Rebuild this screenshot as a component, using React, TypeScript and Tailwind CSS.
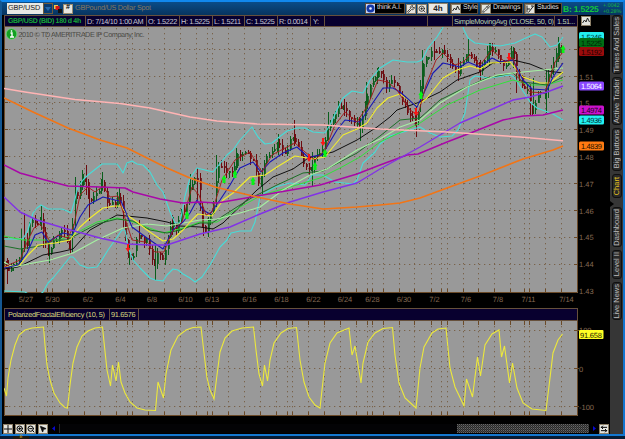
import { Fragment } from "react";
import type { ReactNode } from "react";
import { ArrowLeftRight, MousePointer2, Pencil, Wrench, ZoomIn, ZoomOut } from "lucide-react";

type Point = [number, number];

const parse = (s: string): Point[] =>
  s.trim().split(/\s+/).map((p) => p.split(",").map(Number) as Point);

const gridX = [
  21.5, 36.5, 47.5, 52.5, 68.5, 84.5, 100.5, 116.5, 127.5, 132.5, 148.5, 164.5, 180.5, 196.5, 207.5, 212.5, 228.5,
  244.5, 260.5, 276.5, 287.5, 292.5, 308.5, 324.5, 340.5, 356.5, 367.5, 372.5, 383.5, 399.5, 414.5, 431.5, 441.5,
  447.5, 463.5, 478.5, 494.5, 510.5, 524.5, 529.5, 545.5, 561.5,
];
const gridY = [49.5, 76.5, 102.5, 129.5, 156.5, 183.5, 210.5, 237.5, 264.5];

const priceLabels: [string, number][] = [
  ["1.51", 76.5], ["1.5", 103], ["1.49", 129.5], ["1.48", 156.5], ["1.47", 183.5],
  ["1.46", 210.5], ["1.45", 237], ["1.44", 264], ["1.43", 291],
];

const dates: [string, number][] = [
  ["5/27", 26], ["5/30", 52.5], ["6/2", 88], ["6/4", 120.5], ["6/8", 152], ["6/10", 185.5], ["6/13", 212],
  ["6/16", 249.5], ["6/18", 281.5], ["6/22", 313.5], ["6/24", 345], ["6/28", 372.5], ["6/30", 404],
  ["7/2", 434.5], ["7/6", 466], ["7/8", 498], ["7/11", 528.5], ["7/14", 566.5],
];

const studies: { color: string; width: number; points: string }[] = [
  { color: "#48dcd8", width: 1.1, points: "4,239 23,239 28,230 33,213 37,208 41,205 48,209 62,209 67,211 71,213 74,203 78,187 83,180 88,175 102,164 117,164 120,168 123,173 127,163 132,161 137,164 143,165 150,172 157,185 163,192 170,212 175,223 180,223 185,196 190,178 197,168 213,172 227,155 233,150 240,140 252,127 258,137 265,144 272,143 278,138 287,131 297,128 305,128 313,132 325,133 330,125 337,110 343,98 352,91 363,93 370,80 380,68 393,60 407,62 417,62 422,60 428,48 437,37 445,24 461,20 464,30 468,38 475,43 500,46 515,43 528,37 535,34 542,37 550,47 557,45 563,37" },
  { color: "#48dcd8", width: 1.1, points: "4,291 25,292 35,298 43,292 48,283 53,278 62,267 70,257 73,257 80,265 88,268 97,267 100,263 108,250 115,240 122,230 125,230 128,247 133,260 140,268 150,278 155,280 163,281 167,275 173,269 178,270 183,274 190,278 195,282 202,277 210,265 220,247 227,240 231,233 240,231 251,231 255,222 260,197 265,193 275,187 290,183 305,185 312,175 323,175 335,182 353,184 357,180 363,163 375,152 380,144 390,136 400,133 420,127 430,133 440,137 452,136 458,130 465,113 470,80 475,76 490,78 510,75 514,77 530,102 537,108 553,114 563,120" },
  { color: "#101010", width: 1, points: "4,269 18,267 43,255 60,252 73,249 90,230 117,215 147,218 167,222 180,226 200,227 213,229 223,223 257,190 273,177 293,169 303,162 308,158 333,152 357,140 377,127 390,117 397,110 417,103 440,92 457,80 480,72 493,63 513,60 530,64 547,71 563,73" },
  { color: "#2fe33a", width: 1, points: "4,236 23,240 60,240 80,231 97,222 117,218 133,222 163,233 183,228 200,222 217,222 240,207 262,195 290,187 320,178 340,168 360,157 380,142 420,123 447,105 480,90 513,80 530,85 547,85 563,80" },
  { color: "#1c6f26", width: 1, points: "4,246 20,249 40,246 55,240 67,240 80,233 97,224 117,219 133,221 150,230 167,233 180,230 200,223 212,223 240,205 253,197 277,185 303,173 323,171 357,153 380,136 400,120 420,118 440,100 460,90 487,78 513,73 523,82 547,85 563,77" },
  { color: "#a5f0a2", width: 1.1, points: "4,262 13,267 33,263 50,260 73,253 97,240 123,228 147,224 167,226 200,220 217,219 240,213 260,207 283,190 310,175 327,169 357,150 380,139 400,127 420,120 440,103 467,87 497,75 513,73 563,68" },
  { color: "#f2ee30", width: 1.1, points: "4,267 20,265 28,255 38,245 55,243 70,240 80,227 90,218 103,208 115,206 121,206 127,215 137,222 147,230 163,241 173,239 183,230 190,222 198,214 212,216 223,200 233,193 250,177 265,175 277,167 295,156 313,159 325,157 333,147 343,135 357,129 367,123 377,108 388,98 400,94 417,106 427,98 443,78 457,70 470,66 480,69 490,63 510,62 523,77 540,83 550,83 563,72" },
  { color: "#1717b4", width: 1.1, points: "4,268 18,265 27,253 35,235 42,232 48,242 63,233 72,235 80,217 88,205 103,197 115,200 121,201 132,227 147,238 163,249 173,230 183,222 190,213 197,200 203,210 210,214 220,200 230,185 240,168 253,162 261,172 270,162 283,153 297,147 308,157 322,155 337,130 345,120 360,122 370,107 383,88 393,88 400,92 417,107 423,95 433,73 443,63 460,67 468,62 480,67 492,58 500,62 513,60 523,80 532,89 547,90 553,77 563,63" },
  { color: "#a31616", width: 0.9, points: "4,267 20,260 28,240 34,228 40,224 45,232 50,242 58,235 68,238 74,225 80,195 88,187 95,192 103,186 110,197 118,196 124,215 132,240 145,242 155,252 164,252 172,232 182,222 192,187 199,195 206,215 212,212 222,180 235,160 250,152 262,172 272,155 285,148 295,143 305,152 315,160 325,150 335,125 345,112 357,122 368,105 378,80 388,82 397,90 410,110 418,115 426,85 436,60 443,53 455,65 463,62 470,55 480,65 492,50 505,62 513,58 520,80 530,92 545,93 555,62 563,52" },
  { color: "#a808a8", width: 1.4, points: "4,165 20,173 45,180 68,186 100,187 125,188 133,192 160,199 183,203 200,202 217,203 257,196 320,185 357,174 380,165 407,155 418,154 447,142 473,132 503,120 523,116 543,115 563,110" },
  { color: "#8232e6", width: 1.4, points: "4,197 20,212 37,220 67,229 100,238 127,244 150,245 167,245 200,234 230,227 260,214 290,202 323,192 357,183 380,169 420,147 460,123 490,110 513,100 530,97 547,92 563,86" },
  { color: "#f27516", width: 1.5, points: "4,98 33,112 68,128 100,140 127,148 167,168 190,178 215,187 257,197 290,204 323,209 357,207 380,205 400,203 420,198 447,188 480,176 523,159 553,150 563,146" },
  { color: "#ffb4b4", width: 1.6, points: "4,88.5 25,92 75,99.5 120,103.5 150,108 190,117 217,121 257,124 323,125 380,129 447,132 520,137 563,140.7" },
];

const closes = parse(
  "2,267 5,266 8,270 12,262 18,263 21,250 24,240 27,248 30,220 33,218 36,228 39,222 41,215 44,240 46,248 49,256 52,240 56,240 60,231 63,230 66,238 70,249 73,210 75,190 78,198 80,185 82,176 84,178 87,190 89,210 91,198 95,195 98,195 102,182 105,195 108,210 112,200 115,205 119,192 121,210 124,235 127,248 129,258 133,255 136,240 140,232 143,245 147,240 150,250 153,268 155,260 158,250 162,260 166,245 169,230 172,222 176,230 180,210 184,212 187,205 190,185 194,180 197,178 199,200 203,230 206,235 208,215 212,212 215,185 217,165 219,167 224,168 228,173 232,175 236,155 240,155 247,153 250,157 253,163 257,180 259,187 262,173 265,155 272,153 278,140 282,150 285,155 290,140 294,137 298,148 303,163 307,168 311,172 315,152 320,155 324,145 328,127 333,120 338,108 345,110 350,118 355,122 360,127 365,100 370,87 377,73 381,75 385,88 390,80 395,83 400,95 405,107 408,118 413,118 416,123 419,103 421,83 423,67 427,55 432,53 435,50 442,52 447,57 452,65 458,73 463,60 468,53 473,58 480,73 485,57 488,48 495,50 502,63 505,67 508,57 513,50 517,73 522,85 527,90 530,110 533,113 537,92 542,93 546,93 548,77 552,67 555,57 558,45 563,48",
);

// x, high, low
const spikes: [number, number, number, boolean][] = [
  [7, 258, 284, false], [21, 229, 260, true], [24.5, 213, 250, false], [41, 206, 230, true], [43.5, 213, 248, false],
  [49, 243, 263, true], [70, 238, 254, false], [75, 177, 200, true], [82.5, 170, 190, true], [86.5, 165, 195, false],
  [89, 190, 221, false], [102.5, 172, 190, true], [119, 187, 204, true], [129, 245, 265, true], [139.5, 220, 240, false],
  [155.5, 245, 280, true], [172.5, 215, 235, false], [190, 174, 200, true], [197.5, 168, 200, false],
  [203.5, 215, 236, false], [216.5, 155, 190, true], [236, 148, 170, true], [262.5, 168, 196, true],
  [278, 134, 155, true], [294, 120, 146, false], [312, 152, 186, true], [328.5, 112, 140, true], [344.5, 99, 116, false],
  [360.5, 118, 141, true], [366, 82, 105, true], [377, 68, 84, true], [416.5, 105, 137, false], [422, 50, 100, true],
  [434.5, 41, 60, false], [458.5, 58, 81, false], [468, 38, 62, true], [480, 60, 80, false], [489, 43, 66, true],
  [513, 47, 68, true], [516, 55, 93, false], [530.5, 88, 116, false], [533.5, 78, 114, true], [546.5, 70, 113, true],
  [558.5, 37, 62, true],
];

function yAt(x: number) {
  const i = Math.max(1, closes.findIndex((p) => p[0] >= x));
  const [x0, y0] = closes[i - 1];
  const [x1, y1] = closes[i];
  return y0 + ((y1 - y0) * (x - x0)) / (x1 - x0);
}

const noise = (n: number) => {
  const v = Math.sin(n * 127.1) * 43758.5453;
  return v - Math.floor(v);
};

const candles = Array.from({ length: 210 }, (_, i) => {
  const x = 5.5 + i * 2.66;
  const open = yAt(x - 2.66) + (noise(i) - 0.5) * 5;
  const close = yAt(x) + (noise(i + 1) - 0.5) * 5;
  const top = Math.round(Math.min(open, close));
  const bottom = Math.round(Math.max(open, close));
  return {
    x: Math.round(x),
    up: close < open,
    top,
    height: Math.min(12, Math.max(2, bottom - top)),
    high: top - Math.round(noise(i + 300) * 6),
    low: bottom + Math.round(noise(i + 600) * 6),
  };
});

const signals: [number, number, boolean][] = [
  [128, 248, false], [187, 215, true], [224, 179, true], [235, 174, true], [253, 181, true], [309, 158, false],
  [315, 166, true], [323, 142, false], [325, 153, true], [416, 112, false], [421, 95, true], [509, 57, false],
  [563, 49, true],
];

const pfe =
  "4,388 6.5,396 8,378 11,360 15,345 19,335 25,330 32,328 43.5,327 45,345 47,365 50,380 54,393 60,403 65,407.5 67.5,408 70,385 73,363 77,347 82,336 88,331 95,328 102.5,327 104,342 107,370 110.5,386 112.5,365 116,381 118.5,362 121,382 125,393 130,402 137,408 145,410 155.5,410.5 158,382 163.5,398 166,374 171,350 178,336 186,330 193,327.5 201,327 204,353 207,378 210,390 214,399 217,375 220,352 225,338 232,331 242,328 253.5,327 256,350 259,374 262.5,386 264.5,365 267.5,381 270,360 274,343 281,333 288,328.5 296.5,327.5 300,360 304,382 309,397 315,405 320,408 325,363 330,343 337,333 349,328 352,355 355,346 361,383 363,363 368,342 375,333 383,328.5 392.5,327.5 395,355 399,383 405,398 416,408 420,368 424,347 432,333 438,329 446,328 450,368 455,387 464,406 466.5,379 472.5,397 477.5,357 480.5,376 485,345 492,334 499,330 501.5,357 504.5,346 509.5,383 512.5,363 517,388 523,403 532,409 546,410.5 550,378 553,353 558,340 562.5,334";

const tags: { label: string; y: number; fill: string; text: string }[] = [
  { label: "1.5246", y: 36.5, fill: "#22eeee", text: "#003838" },
  { label: "1.5225", y: 42.5, fill: "#006e14", text: "#001c04" },
  { label: "1.5192", y: 51.5, fill: "#9a0c0c", text: "#1c0000" },
  { label: "1.5064", y: 86, fill: "#8a48ff", text: "#ffffff" },
  { label: "1.4974", y: 110, fill: "#cc12cc", text: "#180018" },
  { label: "1.4936", y: 120, fill: "#22f2f2", text: "#003030" },
  { label: "1.4839", y: 146, fill: "#ff7a12", text: "#201000" },
];

function PriceTag({ label, y, fill, text }: { label: string; y: number; fill: string; text: string }) {
  return (
    <g>
      <rect x="579" y={y - 4.5} width="25" height="9" rx="1.5" fill={fill} />
      <text x="581" y={y + 3} fontSize="7.5" fill={text} textLength="21">{label}</text>
    </g>
  );
}

function PriceChart() {
  return (
    <svg className="block h-[281px] w-[606px]" viewBox="4 27 606 281" fontFamily="Liberation Sans, Arial, sans-serif">
      <defs>
        <clipPath id="plot">
          <rect x="4" y="27" width="573" height="266" />
        </clipPath>
      </defs>
      <rect x="4" y="27" width="574" height="266" fill="#999999" />
      <g stroke="#79624a" strokeWidth="1" strokeDasharray="1.3 3.7">
        {gridX.map((x) => (
          <line key={x} x1={x} x2={x} y1="28" y2="293" />
        ))}
        {gridY.map((y) => (
          <line key={y} x1="4" x2="577" y1={y} y2={y} />
        ))}
      </g>
      <path d={gridX.map((x) => `M${x} 289V293`).join("")} stroke="#6b4a28" />
      <path d={gridY.map((y) => `M4 ${y}h4M574 ${y}h4`).join("")} stroke="#6b4a28" />
      <path d="M4.500 27V292.500H577.500V27" fill="none" stroke="#6b4a28" />
      <g clipPath="url(#plot)">
        {candles.map((c) => (
          <g key={c.x} fill={c.up ? "#0a5e1c" : "#6c0b10"}>
            <rect x={c.x} y={c.high} width="1" height={c.low - c.high} />
            <rect x={c.x} y={c.top} width="1.8" height={c.height} />
          </g>
        ))}
        {spikes.map(([x, high, low, up]) => (
          <rect key={x} x={Math.floor(x)} y={high} width="1" height={low - high} fill={up ? "#0a5e1c" : "#6c0b10"} />
        ))}
        {studies.map((s, i) => (
          <polyline key={i} points={s.points} fill="none" stroke={s.color} strokeWidth={s.width} strokeLinejoin="round" />
        ))}
        {signals.map(([x, y, up]) => (
          <path
            key={`${x}-${y}`}
            d={up ? `M${x} ${y - 4}l2.500 4h-1v4h-3v-4h-1z` : `M${x} ${y + 4}l2.500-4h-1.500v-4h-2v4h-1.500z`}
            fill={up ? "#06f516" : "#fb1515"}
          />
        ))}
      </g>
      <circle cx="11.500" cy="34" r="5.300" fill="#12a022" stroke="#6fd870" strokeWidth="0.8" />
      <path d="M10.500 33h1.500v4M10 37h4M11.500 30.300v1.400" stroke="#fff" strokeWidth="1.400" fill="none" />
      <text x="18.500" y="37" fontSize="7.300" fill="#4c4c48" textLength="126">2010 © TD AMERITRADE IP Company, Inc.</text>
      <g fontSize="7.500" fill="#846953">
        {priceLabels.map(([label, y]) => (
          <text key={label} x="579" y={y + 3}>{label}</text>
        ))}
        {dates.map(([label, x]) => (
          <text key={label} x={x} y="302" textAnchor="middle">{label}</text>
        ))}
      </g>
      {tags.map((t) => (
        <PriceTag key={t.label} {...t} />
      ))}
    </svg>
  );
}

function EfficiencyChart() {
  return (
    <svg className="block h-[102px] w-[606px]" viewBox="4 321 606 102" fontFamily="Liberation Sans, Arial, sans-serif">
      <rect x="4" y="321" width="574" height="95" fill="#999999" />
      <g stroke="#79624a" strokeDasharray="1.3 3.7">
        {gridX.map((x) => (
          <line key={x} x1={x} x2={x} y1="321" y2="416" />
        ))}
        {[330.5, 368.5, 406.5].map((y) => (
          <line key={y} x1="4" x2="577" y1={y} y2={y} />
        ))}
      </g>
      <path d={gridX.map((x) => `M${x} 321v4M${x} 412v4`).join("")} stroke="#6b4a28" />
      <path d="M4 330.500h4M4 368.500h4M4 406.500h4M574 330.500h5M574 368.500h5M574 406.500h5" stroke="#6b4a28" />
      <path d="M4.500 321V415.500H577.500V321" fill="none" stroke="#6b4a28" />
      <polyline points={pfe} fill="none" stroke="#ece83c" strokeWidth="1.1" />
      <g fontSize="7.500" fill="#846953">
        <text x="579" y="333">100</text>
        <text x="579" y="371.500">0</text>
        <text x="579" y="409.500">-100</text>
      </g>
      <rect x="579" y="330" width="24.500" height="9" rx="1" fill="#ffff25" />
      <text x="580" y="337.500" fontSize="7.500" fill="#222200" textLength="22">91.658</text>
    </svg>
  );
}

function HeaderCell({ className, children }: { className: string; children?: ReactNode }) {
  return (
    <div className={`h-full shrink-0 border-r border-[#66503c] whitespace-nowrap ${className}`}>
      {children}
    </div>
  );
}

function ToolIcon({ children }: { children: ReactNode }) {
  return (
    <span className="flex h-[10px] w-[10px] shrink-0 items-center justify-center border border-[#8d8068] bg-[#e4e4de] text-black">
      {children}
    </span>
  );
}

function ToolButton({ icon, label, className }: { icon: ReactNode; label: string; className: string }) {
  return (
    <div className={`flex h-[11px] shrink-0 items-center gap-[2px] border border-[#5d4b38] bg-black text-[7px] tracking-[-0.25px] text-[#dedede] ${className}`}>
      {icon}
      <span className="whitespace-nowrap">{label}</span>
    </div>
  );
}

function StyleGlyph() {
  return (
    <svg className="h-2 w-2" viewBox="0 0 8 8" fill="none" stroke="#222">
      <path d="M0.500 6l2-3 1.500 2 1.500-4 2 4" />
    </svg>
  );
}

function StudiesGlyph() {
  return (
    <svg className="h-2 w-2" viewBox="0 0 8 8" fill="none" stroke="#222">
      <path d="M1 0.500v7M1 4h3M2.500 7.500L7.500 1M5 1h2.500" />
    </svg>
  );
}

function Toolbar() {
  return (
    <div className="flex h-[13px] shrink-0 items-center bg-linear-to-b from-[#0a4c88] to-[#07345f] pl-[5px] text-[7.3px]">
      <div className="flex h-[11px] w-9 items-center bg-[#e8e8e4] pl-px tracking-[-0.1px] text-[#222]">GBP/USD</div>
      <div className="flex h-[11px] w-[10px] items-center justify-center border border-[#6e5b3c] bg-[#073a70]">
        <svg className="h-1 w-1.5" viewBox="0 0 6 4"><path d="M0 0h6L3 4z" fill="#2468ab" /></svg>
      </div>
      <svg className="ml-px h-[9px] w-2" viewBox="0 0 8 9">
        <rect x="0" y="1" width="4" height="4" fill="#eac94a" />
        <rect x="1.500" y="2" width="4" height="4" fill="#d81414" />
        <rect x="4" y="5" width="4" height="4" fill="#111" />
      </svg>
      <span className="ml-px flex h-[10px] w-[10px] items-center justify-center border border-[#9a8c70] bg-[#e4e4de] text-[7px] font-bold text-black">#</span>
      <span className="ml-[2px] w-[73px] tracking-[-0.28px] whitespace-nowrap text-[#827662]">GBPound/US Dollar Spot</span>
      <div className="ml-auto flex items-center">
        <ToolButton
          className="w-[40px]"
          label="think A.I."
          icon={
            <svg className="h-[9px] w-[9px] shrink-0 bg-[#c8d4f0]" viewBox="0 0 9 9">
              <circle cx="4.500" cy="4.500" r="4" fill="#1438a8" />
              <circle cx="4.500" cy="4.500" r="1.300" fill="#eef3ff" />
            </svg>
          }
        />
        <div className="ml-px flex w-[22px] gap-px">
          <ToolIcon><Wrench size={8} /></ToolIcon>
          <ToolIcon><ZoomIn size={8} /></ToolIcon>
        </div>
        <div className="flex h-[11px] w-5 items-center justify-center border border-[#8d8068] bg-[#e9e9e5] text-[8px] font-bold text-[#222]">4h</div>
        <ToolButton className="ml-[2px] w-7" label="Style" icon={<ToolIcon><StyleGlyph /></ToolIcon>} />
        <ToolButton className="ml-[2px] w-[43px]" label="Drawings" icon={<ToolIcon><Pencil size={8} /></ToolIcon>} />
        <ToolButton className="ml-px w-[38px]" label="Studies" icon={<ToolIcon><StudiesGlyph /></ToolIcon>} />
        <div className="ml-px w-[40px] text-[8.5px] leading-[12px] font-bold tracking-[-0.2px] whitespace-nowrap text-[#12c83a]">B: 1.5225</div>
        <div className="w-5 text-[5.5px] leading-[6px] tracking-[-0.1px] text-[#18b83c]">
          <div>+.0042</div>
          <div>+0.28%</div>
        </div>
      </div>
    </div>
  );
}

const sideTabs: { label: string; className: string }[] = [
  { label: "Times And Sales", className: "h-[59px]" },
  { label: "Active Trader", className: "h-12" },
  { label: "Big Buttons", className: "h-[43px]" },
  { label: "Chart", className: "h-6 text-[#e6c31e]" },
  { label: "Dashboard", className: "mt-[6px] h-10" },
  { label: "Level II", className: "h-[29px]" },
  { label: "Live News", className: "h-[38px]" },
];

function SideTabs() {
  return (
    <aside className="flex w-[13px] shrink-0 flex-col items-end gap-[3px] bg-[#363636] pr-px">
      {sideTabs.map((tab) => (
        <Fragment key={tab.label}>
          <div
            className={`flex w-[10px] shrink-0 items-center justify-center rounded-[3px] border border-[#101010] bg-[#292929] text-[7.5px] leading-[8px] whitespace-nowrap text-[#bdbdbd] ${tab.className}`}
          >
            <span className="rotate-180 [writing-mode:vertical-rl]">{tab.label}</span>
          </div>
          {tab.label === "Chart" && (
            <svg className="-mb-[9px] h-[6px] w-1 self-start" viewBox="0 0 4 6"><path d="M0 0l4 3-4 3z" fill="#000" /></svg>
          )}
        </Fragment>
      ))}
    </aside>
  );
}

function BottomBar() {
  return (
    <div className="flex h-[11px] items-center bg-black pr-px">
      <div className="-ml-px flex">
        <ToolIcon>
          <svg className="h-2 w-2" viewBox="0 0 8 8" stroke="#111"><path d="M4 0v8M0 4h8" /></svg>
        </ToolIcon>
        <span className="ml-[2px]"><ToolIcon><ZoomIn size={8} strokeWidth={3} /></ToolIcon></span>
        <span className="ml-px"><ToolIcon><ZoomOut size={8} strokeWidth={3} /></ToolIcon></span>
        <span className="ml-[2px]"><ToolIcon><MousePointer2 size={8} fill="#111" /></ToolIcon></span>
      </div>
      <svg className="ml-1 h-[5px] w-[3px]" viewBox="0 0 3 5"><path d="M3 0v5L0 2.500z" fill="#0808d0" /></svg>
      <div className="ml-1 flex h-[9px] w-[530px] justify-end border-l border-[#282828] bg-[#030305]">
        <svg className="h-[9px] w-[132px]">
          <defs>
            <pattern id="grip" width="2" height="2" patternUnits="userSpaceOnUse">
              <rect width="2" height="2" fill="#292929" />
              <rect width="1" height="1" fill="#686868" />
              <rect x="1" y="1" width="1" height="1" fill="#484848" />
            </pattern>
          </defs>
          <rect width="132" height="9" fill="url(#grip)" />
        </svg>
      </div>
      <svg className="ml-1 h-[5px] w-[3px]" viewBox="0 0 3 5"><path d="M0 0v5l3-2.500z" fill="#0808d0" /></svg>
      <div className="ml-auto"><ToolIcon><ArrowLeftRight size={8} strokeWidth={3} /></ToolIcon></div>
    </div>
  );
}

export default function App() {
  return (
    <div className="flex h-[439px] w-[625px] flex-col overflow-hidden bg-black font-['Liberation_Sans',Arial,sans-serif] [text-rendering:geometricPrecision]">
      <div className="flex h-[436px] shrink-0 flex-col border-2 border-t-[#1188ee] border-r-[#1274cf] border-b-[#1478d0] border-l-[#145792]">
        <Toolbar />
        <div className="flex min-h-0 flex-1">
          <main className="flex min-w-0 flex-1 flex-col pl-[2px]">
            <div className="flex h-3 shrink-0">
              <div className="flex h-3 w-[574px] border border-[#66503c] bg-[#08002f] text-[7.3px] leading-[11px] tracking-[-0.35px] text-[#c4c4d2]">
                <HeaderCell className="w-[81px] pl-[3px] font-bold text-[#16a838] text-[7px]">GBP/USD (BID) 180 d 4h</HeaderCell>
                <HeaderCell className="w-[61px] pl-px">D: 7/14/10 1:00 AM</HeaderCell>
                <HeaderCell className="w-[33px] pl-px">O: 1.5222</HeaderCell>
                <HeaderCell className="w-[33px] pl-px">H: 1.5225</HeaderCell>
                <HeaderCell className="w-8 pl-px">L: 1.5211</HeaderCell>
                <HeaderCell className="w-[33px] pl-px">C: 1.5225</HeaderCell>
                <HeaderCell className="w-[33px] pl-px">R: 0.0014</HeaderCell>
                <HeaderCell className="w-[14px] pl-[2px]">Y:</HeaderCell>
                <HeaderCell className="w-[103px]" />
                <HeaderCell className="w-[25px]" />
                <HeaderCell className="w-[102px] pl-px text-[#b9d2b0]">SimpleMovingAvg (CLOSE, 50, 0)</HeaderCell>
                <div className="pl-[2px] text-[#b9d2b0]">1.51...</div>
              </div>
              <div className="pt-px pl-[3px]"><ToolIcon><StyleGlyph /></ToolIcon></div>
            </div>
            <PriceChart />
            <div className="flex h-[13px] w-[574px] shrink-0 border border-[#66503c] bg-[#08002f] text-[7.3px] leading-[12px] tracking-[-0.3px] text-[#dcdc80]">
              <HeaderCell className="w-[105px] pl-[3px]">PolarizedFractalEfficiency (10, 5)</HeaderCell>
              <HeaderCell className="w-[29px] pl-px">91.6576</HeaderCell>
            </div>
            <EfficiencyChart />
            <BottomBar />
          </main>
          <SideTabs />
        </div>
      </div>
      <div className="flex h-[3px] bg-[#061c34] pl-[13px]">
        <div className="flex h-[3px] w-4 items-start justify-center bg-[#1d1a10] text-[5px] leading-[3px] text-[#d2a51c]">8</div>
      </div>
    </div>
  );
}
